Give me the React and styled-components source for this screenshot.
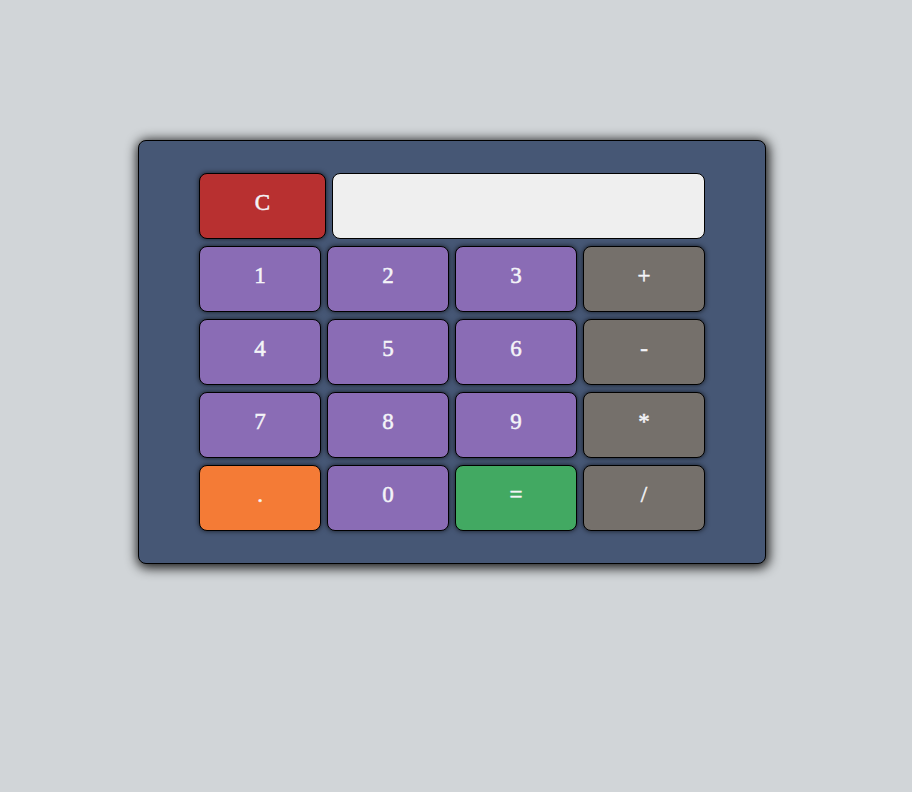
import React from "react";
import styled, { createGlobalStyle } from "styled-components";

const Global = createGlobalStyle`
  html, body { margin: 0; padding: 0; background: #d1d5d8; }
  body { font-family: "Liberation Serif", "Times New Roman", serif; }
`;

const Page = styled.div`
  width: 912px;
  height: 792px;
  padding-top: 140px;
  box-sizing: border-box;
  display: flex;
  justify-content: flex-start;
  padding-left: 138px;
`;

const Card = styled.div`
  width: 628px;
  height: 424px;
  box-sizing: border-box;
  background: #465775;
  border: 1px solid #000;
  border-radius: 8px;
  box-shadow: 1px 2px 12px 2px rgba(0, 0, 0, 0.9);
  padding: 32px 60px;
  display: grid;
  grid-template-columns: repeat(4, 122px);
  grid-auto-rows: 66px;
  column-gap: 6px;
  row-gap: 7px;
`;

const TopRow = styled.div`
  grid-column: 1 / -1;
  display: grid;
  grid-template-columns: 127px 1fr;
  column-gap: 6px;
`;

const colors = {
  num: "#8a6cb5",
  op: "#75706b",
  clear: "#b83030",
  dot: "#f47b36",
  eq: "#42a962",
};

const Key = styled.button`
  box-sizing: border-box;
  margin: 0;
  border: 1px solid #000;
  border-radius: 8px;
  background: ${(p) => colors[p.$kind]};
  color: #f4f4f8;
  font-family: "Liberation Serif", "Times New Roman", serif;
  font-weight: normal;
  font-size: 23px;
  -webkit-text-stroke: 0.5px #f4f4f8;
  padding: 0 0 7px;
  box-shadow: 0 0 5px rgba(0, 0, 0, 0.7);
  display: flex;
  align-items: center;
  justify-content: center;
  cursor: pointer;
`;

const Display = styled.input`
  box-sizing: border-box;
  border: 1px solid #000;
  border-radius: 8px;
  background: #efefef;
  margin: 0;
  font-size: 24px;
  font-family: "Liberation Serif", serif;
  padding: 0 10px;
  outline: none;
`;

const keys = [
  ["1", "num"], ["2", "num"], ["3", "num"], ["+", "op"],
  ["4", "num"], ["5", "num"], ["6", "num"], ["-", "op"],
  ["7", "num"], ["8", "num"], ["9", "num"], ["*", "op"],
  [".", "dot"], ["0", "num"], ["=", "eq"], ["/", "op"],
];

export default function App() {
  return (
    <>
      <Global />
      <Page>
        <Card>
          <TopRow>
            <Key $kind="clear">C</Key>
            <Display readOnly value="" />
          </TopRow>
          {keys.map(([k, kind]) => (
            <Key key={k} $kind={kind}>{k}</Key>
          ))}
        </Card>
      </Page>
    </>
  );
}
